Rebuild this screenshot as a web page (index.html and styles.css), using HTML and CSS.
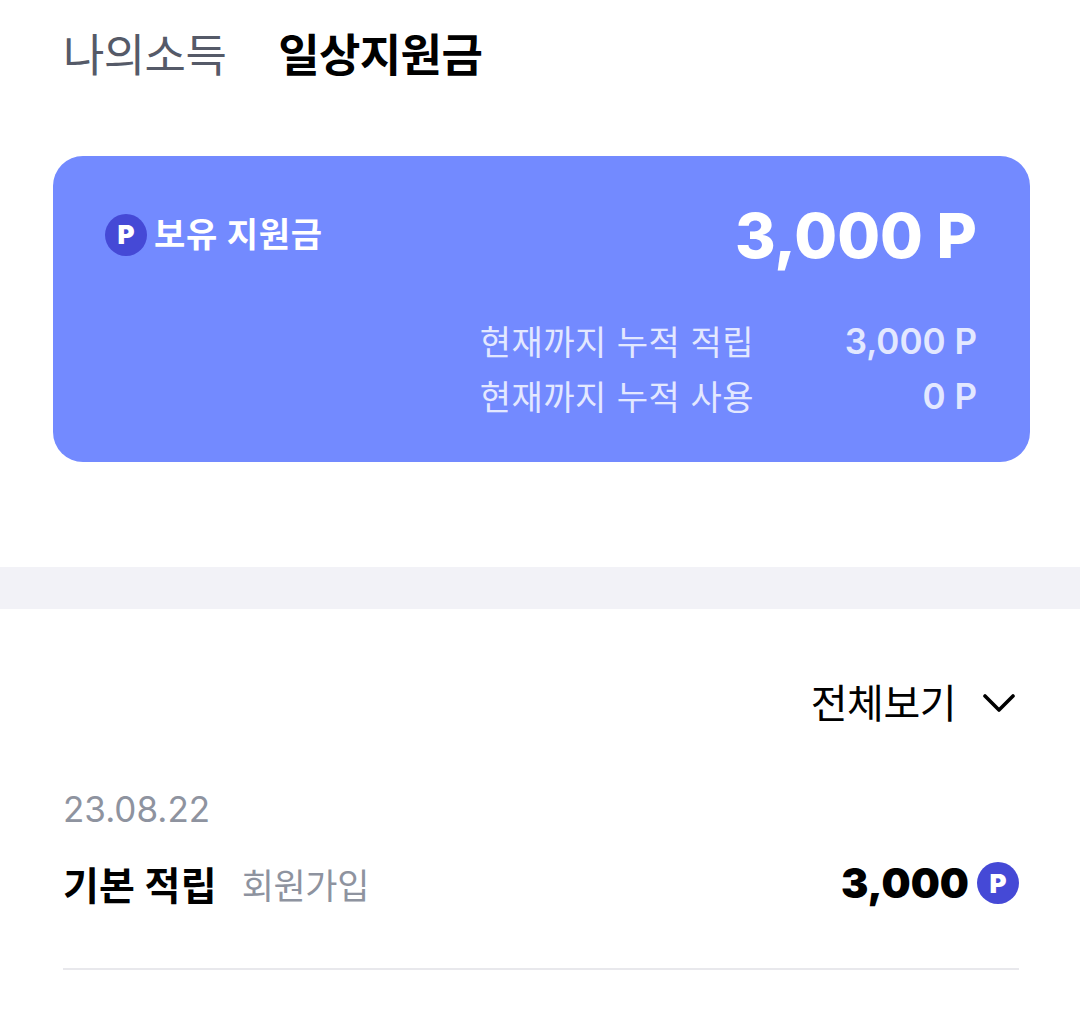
FILE: index.html
```html
<!DOCTYPE html>
<html lang="ko">
<head>
    <meta charset="UTF-8">
    <title>일상지원금</title>
    <link rel="stylesheet" href="styles.css">
</head>
<body>
    <nav class="tabs">
        <span class="tab">나의소득</span>
        <span class="tab tab-active">일상지원금</span>
    </nav>

    <section class="card">
        <div class="card-top">
            <div class="card-title">
                <span class="coin">P</span>
                <span>보유 지원금</span>
            </div>
            <div class="card-total">3,000 P</div>
        </div>
        <div class="card-row">
            <span class="card-label">현재까지 누적 적립</span>
            <span class="card-value">3,000 P</span>
        </div>
        <div class="card-row">
            <span class="card-label">현재까지 누적 사용</span>
            <span class="card-value">0 P</span>
        </div>
    </section>

    <div class="divider"></div>

    <div class="filter">
        <span>전체보기</span>
        <svg class="chevron" width="32" height="18" viewBox="0 0 32 18">
            <path d="M2 2 L16 16 L30 2" fill="none" stroke="#000" stroke-width="3.6" stroke-linecap="round" stroke-linejoin="round"/>
        </svg>
    </div>

    <section class="history">
        <div class="history-date">23.08.22</div>
        <div class="history-row">
            <div class="history-left">
                <span class="history-name">기본 적립</span>
                <span class="history-type">회원가입</span>
            </div>
            <div class="history-right">
                <span class="history-amount">3,000</span>
                <span class="coin">P</span>
            </div>
        </div>
    </section>
</body>
</html>
```

FILE: styles.css
```css
body
{
    margin: 0;
    background-color: #fff;
    color: #000;
    font-family: Inter, "Noto Sans CJK KR", sans-serif;
    overflow: hidden;
}

.tabs
{
    display: flex;
    gap: 52px;
    padding: 29px 0 0 63px;
    height: 156px;
    box-sizing: border-box;
    font-size: 45px;
    line-height: 54px;
    letter-spacing: -0.6px;
}

.tab
{
    color: #555a68;
}

.tab-active
{
    color: #000;
    font-weight: 700;
}

.card
{
    margin: 0 50px 0 53px;
    height: 306px;
    box-sizing: border-box;
    padding: 46px 53px 0 52px;
    background-color: #738aff;
    border-radius: 30px;
    color: #fff;
}

.card-top
{
    display: flex;
    justify-content: space-between;
    align-items: center;
    height: 66px;
    margin-bottom: 45px;
}

.card-title
{
    display: flex;
    align-items: center;
    gap: 7px;
    height: 42px;
    font-size: 34px;
    line-height: 40px;
    font-weight: 700;
    letter-spacing: 0.7px;
}

.card-total
{
    font-size: 62px;
    font-weight: 800;
}

.coin
{
    display: flex;
    align-items: center;
    justify-content: center;
    width: 42px;
    height: 42px;
    border-radius: 50%;
    background-color: #4549d6;
    color: #fff;
    font-size: 26px;
    font-weight: 900;
    letter-spacing: 0;
}

.card-row
{
    display: flex;
    justify-content: flex-end;
    align-items: center;
    height: 55px;
    color: #e3e8ff;
    font-size: 34px;
}

.card-label
{
    letter-spacing: 0.5px;
}

.card-value
{
    width: 223px;
    text-align: right;
    font-size: 35px;
    font-weight: 600;
}

.divider
{
    height: 42px;
    margin-top: 105px;
    background-color: #f2f2f7;
}

.filter
{
    display: flex;
    justify-content: flex-end;
    align-items: center;
    gap: 27px;
    height: 52px;
    margin-top: 66px;
    padding-right: 65px;
    font-size: 40px;
    letter-spacing: -0.5px;
}

.chevron
{
    display: block;
    margin-top: 4px;
}

.history
{
    margin: 61px 61px 0 63px;
    padding-bottom: 60px;
    border-bottom: 2px solid #e8e8ec;
}

.history-date
{
    color: #8e939f;
    font-size: 35px;
    line-height: 42px;
}

.history-row
{
    display: flex;
    justify-content: space-between;
    align-items: center;
    height: 50px;
    margin-top: 28px;
}

.history-left
{
    display: flex;
    align-items: center;
    gap: 25px;
}

.history-name
{
    font-size: 39px;
    font-weight: 700;
    letter-spacing: 0.2px;
}

.history-type
{
    color: #8e939f;
    font-size: 35px;
    letter-spacing: -0.4px;
}

.history-right
{
    display: flex;
    align-items: center;
    gap: 8px;
}

.history-amount
{
    font-size: 41px;
    font-weight: 900;
}
```
